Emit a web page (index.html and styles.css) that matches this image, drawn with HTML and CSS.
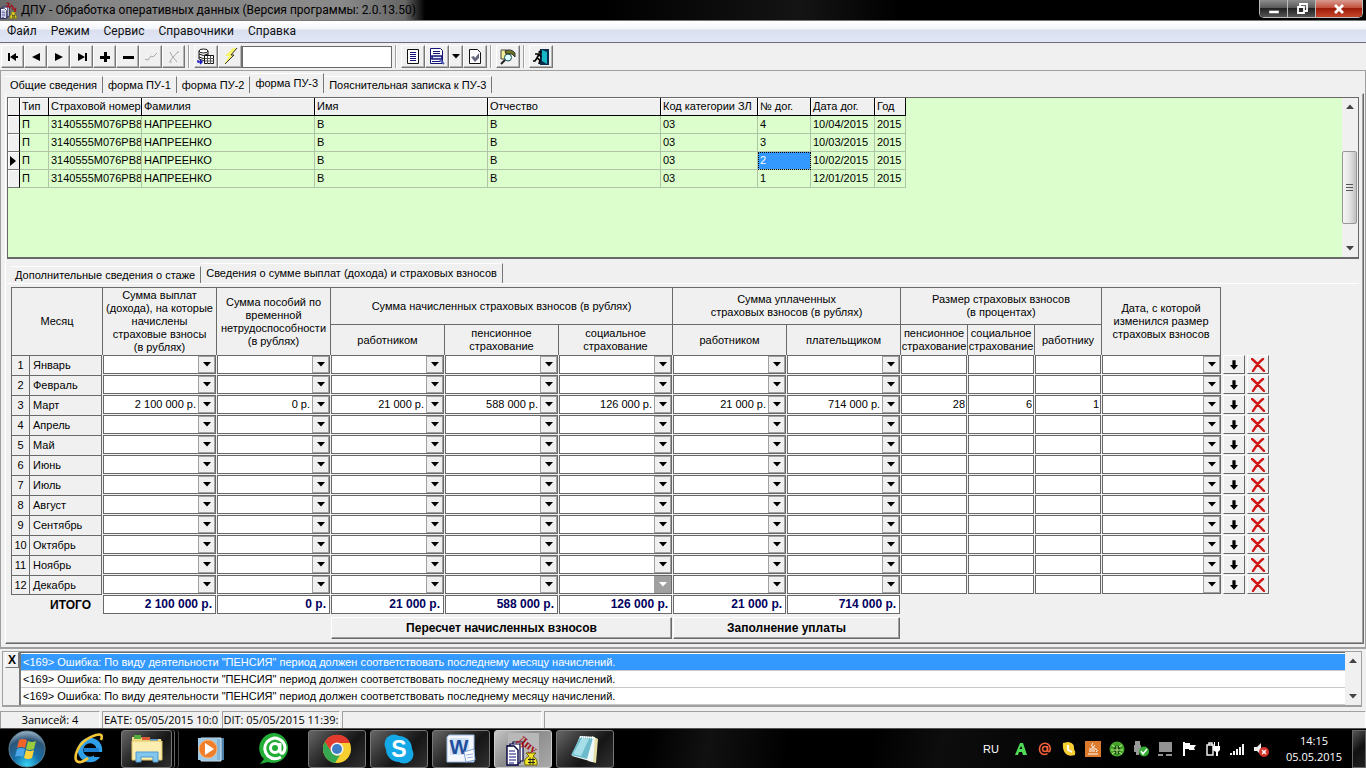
FILE: index.html
```html
<!DOCTYPE html>
<html lang="ru">
<head>
<meta charset="utf-8">
<title>ДПУ - Обработка оперативных данных</title>
<link rel="stylesheet" href="styles.css">
</head>
<body>
<svg class="defs" aria-hidden="true">
  <symbol id="down" viewBox="0 0 8 5"><path d="M0 0h8L4 4.5z" fill="currentColor"/></symbol>
  <symbol id="up" viewBox="0 0 8 5"><path d="M0 5h8L4 .5z" fill="currentColor"/></symbol>
  <symbol id="fill" viewBox="0 0 10 12"><path d="M3 0h4v6h3L5 12 0 6h3z"/></symbol>
  <symbol id="del" viewBox="0 0 14 14"><path d="M1 1c4 3 8 8 12 12M12 1C8 4 5 8 2 13" fill="none" stroke="#d01414" stroke-width="2.4" stroke-linecap="round"/></symbol>
  <symbol id="dpu" viewBox="0 0 32 32">
    <path d="M7 8h10v19H7z" fill="#fff" stroke="#000040" stroke-width="1.2"/>
    <path d="M4 10h10v19H4z" fill="#fff" stroke="#000040" stroke-width="1.2"/>
    <path d="M1 12h7l4 4v15H1z" fill="#fff" stroke="#000040" stroke-width="1.4"/>
    <path d="M3 17h6M3 20h7M3 23h7M3 26h7M3 29h5" stroke="#10107a" stroke-width="1.2"/>
    <path d="M20 19h10l-3 3q5 3 4 9H19q-2-6 4-9z" fill="#f2e52b" stroke="#6f6500"/>
    <path d="M22 25.500h7M22 28.500h7M24 23.500v7M27 23.500v7" stroke="#222"/>
  </symbol>
</svg>

<div class="app">
  <header class="titlebar">
    <svg class="title-icon" viewBox="0 0 32 32"><use href="#dpu"/><path d="M12 2l5 1-2 6M11 8l8 2 3-4 3 4-2 4M25 12l5 5M30 11l-3 8" fill="none" stroke="#a3121a" stroke-width="2.400"/></svg>
    <h1 class="title">ДПУ - Обработка оперативных данных (Версия программы: 2.0.13.50)</h1>
    <div class="winbtns">
      <button class="winbtn" aria-label="Свернуть"><svg width="12" height="12"><path d="M1 7.500h10v3H1z" fill="#fff" stroke="#444" stroke-width=".5"/></svg></button>
      <button class="winbtn" aria-label="Восстановить"><svg width="12" height="12"><path d="M4 3V1h7v7H9M2 4h6v6H2z" fill="none" stroke="#fff" stroke-width="1.800"/></svg></button>
      <button class="winbtn winbtn-close" aria-label="Закрыть"><svg width="12" height="12"><path d="M2 2l8 8M10 2l-8 8" stroke="#fff" stroke-width="2.800"/></svg></button>
    </div>
  </header>

  <nav class="menubar">
    <a href="#">Файл</a><a href="#">Режим</a><a href="#">Сервис</a><a href="#">Справочники</a><a href="#">Справка</a>
  </nav>

  <div class="toolbar">
    <div class="toolgroup">
      <button class="tool" aria-label="Первая"><svg width="12" height="10"><path d="M1 1h2v8H1zM9 1v8L3 5zM9 4h2v2H9z"/></svg></button>
      <button class="tool" aria-label="Предыдущая"><svg width="10" height="10"><path d="M9 1v8L1 5z"/></svg></button>
      <button class="tool" aria-label="Следующая"><svg width="10" height="10"><path d="M1 1v8l8-4z"/></svg></button>
      <button class="tool" aria-label="Последняя"><svg width="12" height="10"><path d="M9 1h2v8H9zM2 1v8l7-4z"/></svg></button>
      <button class="tool" aria-label="Добавить"><svg width="10" height="10"><path d="M4 0h3v4h3v3H7v3H4V7H0V4h4z"/></svg></button>
      <button class="tool" aria-label="Удалить"><svg width="12" height="10"><path d="M1 4h11v3H1z"/></svg></button>
      <button class="tool" aria-label="Сохранить" disabled><svg width="14" height="12"><path d="M1 8l3 1 3-4 2 1 4-4" fill="none" stroke="#a8a8a8"/></svg></button>
      <button class="tool" aria-label="Отменить" disabled><svg width="12" height="12"><path d="M2 1l2 4 5 6M10 1L6 5l-4 5M1 11h3M9 1h2" fill="none" stroke="#a8a8a8"/></svg></button>
    </div>
    <div class="toolgroup">
      <button class="tool" aria-label="База данных"><svg width="18" height="17"><path d="M2 3v8q4 3 9 0V3" fill="#fff" stroke="#111"/><ellipse cx="6.500" cy="3" rx="4.500" ry="2" fill="#fff" stroke="#111"/><path d="M2 6q4 3 9 0M2 9q4 3 9 0" fill="none" stroke="#111"/><path d="M7.500 7.500h9v8h-9z" fill="#fff" stroke="#111"/><path d="M8 10.500h9M8 13h9M10.500 8v8M13.500 8v8" stroke="#555"/><path d="M1 12v2h4M3 12l2 2-2 2" fill="none" stroke="#1717c0" stroke-width="1.400"/></svg></button>
      <button class="tool" aria-label="Обновить"><svg width="16" height="17"><path d="M11 0L3 8h4l-5 8L13 7H9l6-7z" fill="#f7f36a"/><path d="M15 0L9 7h3L3 16" fill="none" stroke="#333"/></svg></button>
      <input class="search" type="text" aria-label="Поиск">
    </div>
    <div class="toolgroup">
      <button class="tool" aria-label="Документ"><svg width="12" height="15"><path d="M.5.500h11v14H.5z" fill="#fff" stroke="#111"/><path d="M3 3.500h6M3 5.500h6M3 7.500h6M3 9.500h6M3 11.500h6" stroke="#141478"/></svg></button>
      <button class="tool" aria-label="Просмотр"><svg width="16" height="17"><path d="M1.500.500h10l2 2v13h-12z" fill="#fff" stroke="#141478"/><path d="M4 3.500h7M4 5.500h7M3 13.500h8" stroke="#141478"/><path d="M3 8h10v3H3z" fill="#dce5ff" stroke="#141478" stroke-width="1.600"/><path d="M11 12l4 4" stroke="#4d5fb5" stroke-width="2"/></svg></button>
      <button class="tool tool-more" aria-label="Ещё"><svg width="8" height="5"><use href="#down"/></svg></button>
      <button class="tool" aria-label="Проверка"><svg width="12" height="15"><path d="M.5.500h8l3 3v11H.5z" fill="#fff" stroke="#111"/><path d="M2 8l3-1 1 2 4-5v5l-4 4z" fill="#66667f"/></svg></button>
    </div>
    <div class="toolgroup">
      <button class="tool" aria-label="Поиск документа"><svg width="16" height="16"><path d="M1 1h6l1 1v8H1z" fill="#f4ef95" stroke="#444"/><path d="M5 2q6-3 10 2v4l-3-3H6z" fill="#6f7324" stroke="#333"/><circle cx="8" cy="8.500" r="3.500" fill="#dff" stroke="#174d4d"/><path d="M5 11l-4 4" stroke="#222" stroke-width="2"/></svg></button>
    </div>
    <div class="toolgroup">
      <button class="tool" aria-label="Выход"><svg width="16" height="16"><path d="M7 0h9v16H7z" fill="#082f50"/><path d="M9 1l5 2v12l-5-3z" fill="#18b7c6"/><circle cx="7" cy="3" r="1.600"/><path d="M2 5l4 0 2 3M6 5L4 9l3 2-1 4M4 9l-2 3H0" fill="none" stroke="#000" stroke-width="1.700"/></svg></button>
    </div>
  </div>

  <main class="workspace">
    <div class="tabs" role="tablist">
      <button class="tab" role="tab">Общие сведения</button>
      <button class="tab" role="tab">форма ПУ-1</button>
      <button class="tab" role="tab">форма ПУ-2</button>
      <button class="tab tab-active" role="tab" aria-selected="true">форма ПУ-3</button>
      <button class="tab" role="tab">Пояснительная записка к ПУ-3</button>
    </div>

    <div class="sheet">
      <section class="grid-box">
        <div class="grid-area">
          <table class="grid">
            <colgroup><col class="g-ind"><col class="g-type"><col class="g-num"><col class="g-name"><col class="g-name"><col class="g-name"><col class="g-code"><col class="g-dog"><col class="g-date"><col class="g-year"></colgroup>
            <thead><tr><th></th><th>Тип</th><th>Страховой номер</th><th>Фамилия</th><th>Имя</th><th>Отчество</th><th>Код категории ЗЛ</th><th>№ дог.</th><th>Дата дог.</th><th>Год</th></tr></thead>
            <tbody>
              <tr><th></th><td>П</td><td>3140555М076РВ8</td><td>НАПРЕЕНКО</td><td>В</td><td>В</td><td>03</td><td>4</td><td>10/04/2015</td><td>2015</td></tr>
              <tr><th></th><td>П</td><td>3140555М076РВ8</td><td>НАПРЕЕНКО</td><td>В</td><td>В</td><td>03</td><td>3</td><td>10/03/2015</td><td>2015</td></tr>
              <tr><th><svg class="pointer" width="6" height="10"><path d="M0 0v10l6-5z"/></svg></th><td>П</td><td>3140555М076РВ8</td><td>НАПРЕЕНКО</td><td>В</td><td>В</td><td>03</td><td class="picked">2</td><td>10/02/2015</td><td>2015</td></tr>
              <tr><th></th><td>П</td><td>3140555М076РВ8</td><td>НАПРЕЕНКО</td><td>В</td><td>В</td><td>03</td><td>1</td><td>12/01/2015</td><td>2015</td></tr>
            </tbody>
          </table>
        </div>
        <div class="scroll">
          <svg width="8" height="5"><use href="#up"/></svg>
          <div class="track"><div class="thumb"><svg width="7" height="8"><path d="M0 .5h7M0 3.500h7M0 6.500h7" stroke="#555"/></svg></div></div>
          <svg width="8" height="5"><use href="#down"/></svg>
        </div>
      </section>

      <div class="tabs subtabs" role="tablist">
        <button class="tab" role="tab">Дополнительные сведения о стаже</button>
        <button class="tab tab-active" role="tab" aria-selected="true">Сведения о сумме выплат (дохода) и страховых взносов</button>
      </div>

      <section class="pay-box">
        <table class="pay">
          <colgroup><col class="p-no"><col class="p-month"><col class="p-sum"><col class="p-sum"><col class="p-sum"><col class="p-sum"><col class="p-sum"><col class="p-sum"><col class="p-sum"><col class="p-pct"><col class="p-pct"><col class="p-pct"><col class="p-date"><col class="p-act"><col class="p-act"></colgroup>
          <thead>
            <tr class="head-top">
              <th colspan="2" rowspan="2">Месяц</th>
              <th rowspan="2">Сумма выплат<br>(дохода), на которые<br>начислены<br>страховые взносы<br>(в рублях)</th>
              <th rowspan="2">Сумма пособий по<br>временной<br>нетрудоспособности<br>(в рублях)</th>
              <th colspan="3">Сумма начисленных страховых взносов (в рублях)</th>
              <th colspan="2">Сумма уплаченных<br>страховых взносов (в рублях)</th>
              <th colspan="3">Размер страховых взносов<br>(в процентах)</th>
              <th rowspan="2" class="last">Дата, с которой<br>изменился размер<br>страховых взносов</th>
            </tr>
            <tr class="head-sub">
              <th>работником</th><th>пенсионное<br>страхование</th><th>социальное<br>страхование</th><th>работником</th><th>плательщиком</th><th>пенсионное<br>страхование</th><th>социальное<br>страхование</th><th>работнику</th>
            </tr>
          </thead>
          <tbody id="months"></tbody>
          <tfoot>
            <tr class="totals">
              <th colspan="2">ИТОГО</th>
              <td><output>2 100 000 р.</output></td><td><output>0 р.</output></td><td><output>21 000 р.</output></td><td><output>588 000 р.</output></td><td><output>126 000 р.</output></td><td><output>21 000 р.</output></td><td><output>714 000 р.</output></td>
            </tr>
            <tr class="actions">
              <td colspan="4"></td>
              <td colspan="3"><button class="wide">Пересчет начисленных взносов</button></td>
              <td colspan="2"><button class="wide">Заполнение уплаты</button></td>
            </tr>
          </tfoot>
        </table>
      </section>
    </div>
  </main>

  <section class="log">
    <button class="log-close" aria-label="Закрыть список">X</button>
    <ul class="log-list">
      <li class="log-picked">&lt;169&gt; Ошибка: По виду деятельности "ПЕНСИЯ" период должен соответствовать последнему месяцу начислений.</li>
      <li>&lt;169&gt; Ошибка: По виду деятельности "ПЕНСИЯ" период должен соответствовать последнему месяцу начислений.</li>
      <li>&lt;169&gt; Ошибка: По виду деятельности "ПЕНСИЯ" период должен соответствовать последнему месяцу начислений.</li>
    </ul>
    <div class="scroll">
      <svg width="8" height="5"><use href="#up"/></svg>
      <svg width="8" height="5"><use href="#down"/></svg>
    </div>
  </section>

  <footer class="status">
    <span class="st st-count">Записей: 4</span>
    <span class="st st-time">EATE: 05/05/2015 10:0</span>
    <span class="st st-time">DIT: 05/05/2015 11:39:</span>
    <span class="st st-wide"></span>
    <span class="st st-rest"></span>
  </footer>
</div>

<div class="taskbar">
  <button class="start" aria-label="Пуск"><svg width="40" height="40" viewBox="0 0 40 40">
    <defs><radialGradient id="orb" cx=".5" cy=".95" r=".95"><stop offset="0" stop-color="#35d5f5"/><stop offset=".4" stop-color="#176fa8"/><stop offset=".75" stop-color="#2d5578"/><stop offset="1" stop-color="#9fb7c9"/></radialGradient></defs>
    <circle cx="20" cy="20" r="18" fill="url(#orb)" stroke="#5f8297"/>
    <path d="M12 11q4-2 8 0l-2 8q-4-2-8 0z" fill="#f0642a"/><path d="M21 12q4 2 8 0l-2 8q-4 2-8 0z" fill="#9acb3c"/><path d="M10 20q4-2 8 0l-2 8q-4-2-8 0z" fill="#4aa6e8"/><path d="M19 21q4 2 8 0l-2 8q-4 2-8 0z" fill="#ffd43a"/>
  </svg></button>
  <button class="task task-flat" aria-label="Internet Explorer"><svg width="34" height="34" viewBox="0 0 34 34">
    <circle cx="18" cy="18" r="9.500" fill="none" stroke="#2f9fe8" stroke-width="5.500"/><path d="M12 18h15" stroke="#1d7fd0" stroke-width="4"/><path d="M22 20h9v5h-9z" fill="#000"/><path d="M29 8q3-7-5-5Q8 8 4 22q-2 9 5 8 4-1 7-4" fill="none" stroke="#f3c63a" stroke-width="2.600"/>
  </svg></button>
  <button class="task task-stack" aria-label="Проводник"><svg width="34" height="32" viewBox="0 0 34 32">
    <path d="M2 4h9l2 2h18v21H2z" fill="#f3dc84"/><path d="M4 2h7v4H4z" fill="#53ad3d"/><path d="M12 4h8v3h-8z" fill="#d85b36"/><path d="M20 6h8v3h-8z" fill="#4a91d0"/><path d="M2 8h30v19H2z" fill="#fbeeb0" stroke="#dfc262"/><path d="M6 29V19h22v10h-5v-5H11v5z" fill="#82c6ee" stroke="#4c9bd2"/>
  </svg></button>
  <button class="task task-flat task-player" aria-label="Проигрыватель"><svg width="30" height="30" viewBox="0 0 30 30">
    <path d="M8 4h20v22H8z" fill="#4c7fa8"/><path d="M5 4h20v23H5z" fill="#83b6d9" stroke="#d4e9f6"/><path d="M2 4h19v22H2z" fill="#9ecbe8"/><circle cx="12" cy="15" r="9" fill="#f07f2c" stroke="#f9b070"/><path d="M9 9v12l9-6z" fill="#fff"/>
  </svg></button>
  <button class="task task-flat" aria-label="Агент"><svg width="36" height="36" viewBox="0 0 36 36">
    <path d="M18 2a15 15 0 1 1-7 29l-8 2 4-5A15 15 0 0 1 18 2z" fill="#22ad36"/><circle cx="18" cy="17" r="4.500" fill="none" stroke="#fff" stroke-width="3"/><path d="M23 12v7q0 4 3 3 4-5 0-11-8-8-16 0-5 7 1 14 6 5 13 1" fill="none" stroke="#fff" stroke-width="3"/>
  </svg></button>
  <div class="taskgroup">
    <button class="task" aria-label="Chrome"><svg width="32" height="32" viewBox="0 0 32 32">
      <circle cx="16" cy="16" r="14" fill="#f8cf30"/><path d="M16 16L4 9A14 14 0 0 1 29 10H16z" fill="#e23b2e"/><path d="M16 16l-4 13A14 14 0 0 1 4 9l7 10z" fill="#36a852"/><path d="M10 18L4 9q4-7 12-7 9 0 13 8H16q-6 0-6 8z" fill="#e23b2e"/><path d="M4 9l6 11q4 4 9 2l-5 8A14 14 0 0 1 4 9z" fill="#36a852"/><circle cx="16" cy="16" r="6.500" fill="#f5f5f5"/><circle cx="16" cy="16" r="5" fill="#3d7ec4"/>
    </svg></button>
    <button class="task" aria-label="Skype"><svg width="32" height="32" viewBox="0 0 32 32">
      <circle cx="11" cy="11" r="9.500" fill="#14a8e6"/><circle cx="21" cy="21" r="9.500" fill="#14a8e6"/><circle cx="16" cy="16" r="13" fill="#14a8e6"/><text x="16" y="24" class="mark mark-s">S</text>
    </svg></button>
    <button class="task" aria-label="Word"><svg width="32" height="32" viewBox="0 0 32 32">
      <path d="M4 2h25v27H2V4z" fill="#f3f7fd" stroke="#9bb9df"/><path d="M5 5h19v17H5z" fill="#d3e1f4"/><text x="14" y="21" class="mark mark-w">W</text><path d="M19 19l10-3 1 11-9 2z" fill="#fff" stroke="#7ea3d6"/><path d="M21 22l7-1M22 25l6-1" stroke="#8fb0de"/>
    </svg></button>
    <button class="task task-current" aria-label="ДПУ"><svg width="34" height="34" viewBox="0 0 34 34"><path d="M2 1h31v32H2z" fill="#b8b8b8"/><use href="#dpu" y="2" width="32" height="32"/><text x="11" y="9" class="dpu-mark" transform="rotate(38 11 9)">Дпу</text></svg></button>
    <button class="task" aria-label="Блокнот"><svg width="34" height="32" viewBox="0 0 34 32">
      <path d="M24 3l6 3-2 24-8-2z" fill="#e6dfa8"/><path d="M12 3l15 1-2 25-21-6z" fill="#eef8fa"/><path d="M12 4l13 1-6 21-16-4z" fill="#6dbccb"/><path d="M14 5l7 1-8 17-8-2z" fill="#a7dfe8"/><path d="M12 4l14 1" stroke="#fff" stroke-width="2" stroke-dasharray="1 1"/>
    </svg></button>
  </div>
  <div class="tray">
    <span class="lang">RU</span>
    <svg width="16" height="16"><path d="M2 14L7 2h3l4 12h-4l-1-3H6l-1 3zM6.500 8h3L8 5z" fill="#4fdd55" fill-rule="evenodd"/></svg>
    <svg width="16" height="16"><circle cx="8" cy="8" r="2.500" fill="none" stroke="#f0603a" stroke-width="1.600"/><path d="M10.500 5v4q0 2 2 1.500 2-4-1-7-5-3-8 1-2.500 5 1 8 3 2 6 0" fill="none" stroke="#f0603a" stroke-width="1.600"/></svg>
    <svg width="16" height="16"><path d="M2 2l5-1q7 1 6 7 2 3 1 6-6 2-9-1-4-4-3-11z" fill="#f8cf33"/><path d="M7 4v5l4 2" stroke="#fff" stroke-width="1.800" fill="none"/></svg>
    <svg width="16" height="16"><path d="M0 0h16v16H0z" fill="#dd7a2c"/><path d="M8 2q-3 2 0 5M10 4q-2 1-1 3M4 8h7q3 1 0 3M4 10h6M3 13h10" stroke="#fff" fill="none"/></svg>
    <svg width="16" height="16"><circle cx="8" cy="8" r="7.500" fill="#45a52b"/><ellipse cx="8" cy="9" rx="3.500" ry="4.500" fill="#154d0c"/><path d="M3 4l3 2M13 4l-3 2M2 9h12M3 13l3-2M13 13l-3-2M8 5v8" stroke="#c3f28a"/></svg>
    <svg width="16" height="16"><path d="M2 0h5v4h1v7H6v3H3v-3H1V4h1z" fill="#999"/><circle cx="11" cy="10.500" r="5" fill="#35ad35"/><path d="M8 10l2 3 4-5" fill="none" stroke="#fff" stroke-width="1.500"/></svg>
    <svg width="16" height="16"><path d="M2 1h13v10H2zM1 13h5v2H1zM9 13h6v2H9z" fill="#929292"/></svg>
    <svg width="16" height="16"><path d="M2 1h2v14H2zM4 2h5v2h6l-2 3 1 2H8V8H4z" fill="#fff"/></svg>
    <svg width="16" height="16"><path d="M2 4h6v10H2zM4 2h3v2H4z" fill="none" stroke="#eee" stroke-width="1.500"/><path d="M8 5h7v4l-2 2v4h-2v-4L8 9zM9 1h1v4H9zM13 1h1v4h-1z" fill="#fff"/></svg>
    <svg width="16" height="16"><path d="M1 12h2v2H1zM4 10h2v4H4zM7 8h2v6H7zM10 6h2v8h-2zM13 3h2v11h-2z" fill="#f2f2f2"/></svg>
    <svg width="16" height="16"><path d="M1 6h3l4-4v12l-4-4H1z" fill="#eee"/><circle cx="11" cy="11" r="5" fill="#d5302a"/><path d="M9 9l4 4M13 9l-4 4" stroke="#fff" stroke-width="1.500"/></svg>
  </div>
  <div class="clock"><time>14:15</time><span>05.05.2015</span></div>
  <button class="peek" aria-label="Рабочий стол"></button>
</div>
<script src="months.js"></script>
</body>
</html>
```
FILE: styles.css
```css
* { box-sizing: border-box; }
body {
  margin: 0;
  min-height: 100vh;
  display: flex;
  flex-direction: column;
  background: #f0f0f0;
  color: #000;
  font: 11px/13px "Liberation Sans", Arial, sans-serif;
}
button, input, output { font: inherit; color: inherit; }
button { padding: 0; border: 0; background: none; }
svg { display: block; flex: none; }
.defs { position: absolute; width: 0; height: 0; }
.dpu-mark { font: bold 12px "Liberation Serif", serif; fill: #a3121a; }
.mark { font: bold 23px "Liberation Sans", sans-serif; text-anchor: middle; }
.mark-s { fill: #fff; }
.mark-w { font-size: 20px; fill: #1d4f9f; }

.app { flex: 1; display: flex; flex-direction: column; }

/* Title bar */
.titlebar {
  height: 21px;
  display: flex;
  align-items: center;
  background: linear-gradient(90deg, #6a6a6a 0, #858585 80px, #8a8a8a 340px, #666 405px, #000 425px, #000 600px, #141414 800px, #000 900px);
  border-bottom: 1px solid #777;
}
.title-icon { width: 17px; height: 17px; }
.title { flex: 1; margin: 0 0 0 4px; font: 12px/18px Roboto, "Open Sans", sans-serif; white-space: nowrap; }
.winbtns { display: flex; align-self: flex-start; margin-right: 3px; border: 1px solid #bbb; border-top: 0; border-radius: 0 0 5px 5px; overflow: hidden; }
.winbtn { width: 28px; height: 17px; display: grid; place-items: center; background: linear-gradient(#8d8d8d, #5a5a5a 45%, #222 50%, #555); border-right: 1px solid #bbb; }
.winbtn-close { width: 46px; border-right: 0; background: linear-gradient(#d79b8f, #c3503c 45%, #9c1c08 50%, #c8452c); }

/* Menu */
.menubar {
  height: 22px;
  display: flex;
  gap: 14px;
  padding: 0 7px;
  background: linear-gradient(#fff 0, #f4f6fb 35%, #dae0f0 45%, #e2e7f6 100%);
  border-bottom: 1px solid #6d6d78;
}
.menubar a { color: #111; text-decoration: none; font: 12px/21px Roboto, "Open Sans", sans-serif; }

/* Toolbar */
.toolbar { height: 28px; display: flex; align-items: center; padding-left: 1px; border-bottom: 1px solid #a0a0a0; background: #f0f0f0; }
.toolgroup { display: flex; gap: 0; align-items: center; }
.toolgroup + .toolgroup { margin-left: 3px; padding-left: 5px; border-left: 1px solid #a0a0a0; box-shadow: inset 1px 0 #fff; }
.tool { width: 23px; height: 23px; display: grid; place-items: center; border: 1px solid; border-color: #fff #777 #777 #fff; box-shadow: inset -1px -1px #b5b5b5; }
.toolgroup + .toolgroup .tool { width: 24px; }
.toolgroup + .toolgroup .tool-more { width: 14px; }
.search { width: 150px; height: 22px; padding: 0 4px; border: 1px solid #696969; background: #fff; }

/* Tabs */
.workspace { flex: 1; display: flex; flex-direction: column; padding: 0 1px 3px 4px; border: 1px solid #a0a0a0; border-width: 0 1px 2px 1px; }
.tabs { display: flex; align-items: flex-end; height: 22px; }
.tab { height: 17px; padding: 0 5px; border-top: 1px solid #fff; border-right: 1px solid #777; white-space: nowrap; }
.tab-active { height: 20px; }

.sheet { flex: 1; display: flex; flex-direction: column; padding: 3px 4px 1px 1px; border: 1px solid; border-color: transparent #696969 #696969 #fff; box-shadow: inset -1px -1px #a0a0a0; }

/* Contracts grid */
.grid-box { flex: 1; min-height: 130px; display: flex; border: 1px solid #696969; border-bottom-width: 2px; background: #dcfdcc; }
.grid-area { flex: 1; min-width: 0; overflow: hidden; }
.grid { table-layout: fixed; width: 898px; border-collapse: separate; border-spacing: 0; }
.g-ind { width: 12px; } .g-type { width: 29px; } .g-num { width: 93px; } .g-name { width: 173px; }
.g-code { width: 97px; } .g-dog { width: 53px; } .g-date { width: 64px; } .g-year { width: 31px; }
.grid th, .grid td { height: 18px; padding: 0 0 0 2px; font-weight: normal; text-align: left; white-space: nowrap; overflow: hidden; }
.grid th { background: #f0f0f0; border-right: 1px solid #000; border-bottom: 1px solid #000; box-shadow: inset 1px 1px #fff; }
.grid tbody th { border-bottom-color: #777; }
.grid td { border-right: 1px solid #b0c4a6; border-bottom: 1px solid #b0c4a6; }
.grid .picked { background: #3399ff; color: #fff; outline: 1px dotted #000; outline-offset: -1px; }

/* Scroll bars */
.scroll { width: 16px; display: flex; flex-direction: column; align-items: center; justify-content: space-between; padding: 6px 0; background: #f0f0f0; color: #444; }
.track { flex: 1; width: 100%; padding: 42px 1px 22px 0; display: flex; }
.thumb { flex: 1; display: grid; place-items: center; border: 1px solid #979797; border-radius: 2px; background: linear-gradient(90deg, #f5f5f5, #e4e4e4 50%, #c0c0c0); }

/* Payments */
.subtabs { padding-left: 3px; margin-top: 2px; }
.pay-box { padding: 3px 0 3px 4px; border-top: 1px solid #fff; }
.pay { table-layout: fixed; width: 1258px; border-collapse: separate; border-spacing: 0; }
.p-no { width: 18px; } .p-month { width: 73px; } .p-sum { width: 114px; } .p-pct { width: 67px; }
.p-date { width: 120px; } .p-act { width: 24px; }
.pay th, .pay td { padding: 0; font-weight: normal; }
.pay thead th { border-top: 1px solid #696969; border-left: 1px solid #696969; white-space: nowrap; }
.pay thead .last { border-right: 1px solid #696969; }
.head-top { height: 37px; }
.head-sub { height: 31px; }
.pay tbody tr { height: 20px; }
.pay tbody th { border-top: 1px solid #696969; border-left: 1px solid #696969; }
.pay tbody tr:last-child th { border-bottom: 1px solid #696969; }
.pay .month { text-align: left; padding-left: 3px; border-right: 1px solid #696969; }
.pay tbody td, .totals td { padding: 0 0 1px 1px; }
.pay tbody .act { padding-left: 2px; }
.field { height: 19px; display: flex; border: 1px solid #696969; background: #fff; }
.field input { flex: 1; min-width: 0; width: 100%; padding: 0 1px 0 0; border: 0; outline: 0; background: none; text-align: right; }
.field-combo input { padding-right: 2px; }
.drop { width: 17px; display: grid; place-items: center; background: #f0f0f0; border: 1px solid #a0a0a0; }
.drop-used { background: #a0a0a0; color: #fff; }
.rowbtn { width: 100%; height: 19px; display: grid; place-items: center; border: 1px solid; border-color: #fff #696969 #696969 #fff; }
.totals { font-size: 12px; }
.totals th { text-align: right; }
.pay .totals th, .wide { font-weight: bold; }
.pay .totals th { padding-right: 11px; }
.totals output { display: block; height: 19px; padding: 0 3px; border: 1px solid #696969; background: #fff; color: #000060; font-weight: bold; line-height: 17px; text-align: right; }
.actions td { padding: 2px 0 0 1px; }
.wide { width: 100%; height: 22px; font-size: 12px; border: 1px solid; border-color: #fff #696969 #696969 #fff; box-shadow: inset -1px -1px #a0a0a0; }

/* Error list */
.log { display: flex; margin: 2px 4px 3px 2px; padding-left: 2px; border: 1px solid #a0a0a0; border-width: 1px 1px 2px 1px; }
.log-close { align-self: flex-start; width: 14px; height: 16px; font-weight: bold; font-size: 12px; border: 1px solid; border-color: #fff #777 #777 #fff; }
.log-list { flex: 1; margin: 0; padding: 1px 0 0 0; list-style: none; background: #fff; border-left: 2px solid #777; border-top: 1px solid #696969; }
.log-list li { height: 17px; padding-left: 2px; line-height: 17px; border-bottom: 1px solid #c8c8c8; white-space: nowrap; }
.log-list .log-picked { background: #3399ff; color: #fff; }

/* Status bar */
.status { display: flex; gap: 2px; height: 18px; padding-top: 1px; font: 11px/15px "Open Sans", sans-serif; }
.st { border-left: 1px solid #a0a0a0; border-top: 1px solid #a0a0a0; border-right: 1px solid #fff; text-align: center; white-space: nowrap; overflow: hidden; }
.st-count { width: 100px; }
.st-time { width: 118px; }
.st-wide { width: 200px; }
.st-rest { flex: 1; }

/* Task bar */
.taskbar {
  height: 40px;
  display: flex;
  align-items: center;
  border-top: 1px solid #555;
  background: linear-gradient(100deg, #000 0, #000 640px, #111 700px, #000 780px, #000 860px, #0d0d0d 930px, #000 1100px);
  color: #fff;
}
.start { width: 40px; margin-left: 7px; }
.task { width: 58px; height: 38px; display: grid; place-items: center; border: 1px solid #777; border-radius: 3px; background: linear-gradient(135deg, #666 0, #333 35%, #161616 60%, #303030 100%); }
.task-flat { border-color: transparent; background: none; }
.start + .task-flat { width: 64px; margin-left: 10px; }
.task-stack { width: 51px; box-shadow: 2px 0 #000, 3px 0 #666, 6px 0 #000, 7px 0 #444; }
.task-player { margin-left: 10px; }
.task-player + .task-flat { width: 64px; margin-left: 3px; margin-right: 1px; }
.taskgroup { display: flex; gap: 4px; }
.task-current { border-color: #ccc; background: linear-gradient(135deg, #c5c5c5, #8a8a8a 45%, #aaa 100%); }
.tray { display: flex; align-items: center; gap: 8px; margin-left: auto; }
.lang { margin-right: 6px; font: 11px/16px "Liberation Sans", sans-serif; }
.clock { width: 72px; margin: 0 2px 0 9px; display: flex; flex-direction: column; align-items: center; font: 11px/16px "Open Sans", sans-serif; }
.peek { width: 14px; height: 38px; border: 1px solid #666; background: linear-gradient(135deg, #555, #111 50%, #222); }
```
FILE: months.js
```js
const names = ["Январь", "Февраль", "Март", "Апрель", "Май", "Июнь", "Июль",
  "Август", "Сентябрь", "Октябрь", "Ноябрь", "Декабрь"];
const values = {
  2: ["2 100 000 р.", "0 р.", "21 000 р.", "588 000 р.", "126 000 р.", "21 000 р.", "714 000 р.", "28", "6", "1", ""]
};
const columns = ["Сумма выплат", "Сумма пособий", "Начислено работником",
  "Начислено пенсионное", "Начислено социальное", "Уплачено работником",
  "Уплачено плательщиком", "Пенсионное, %", "Социальное, %", "Работнику, %", "Дата изменения"];
const isCombo = col => col < 7 || col === 10;

function field(row, col) {
  const value = values[row] ? values[row][col] : "";
  const label = `${names[row]}: ${columns[col]}`;
  const used = row === 11 && col === 4 ? " drop-used" : "";
  const drop = isCombo(col)
    ? `<button class="drop${used}" aria-label="Открыть: ${label}"><svg width="8" height="5"><use href="#down"/></svg></button>`
    : "";
  return `<td><div class="field${drop ? " field-combo" : ""}"><input type="text" aria-label="${label}" value="${value}">${drop}</div></td>`;
}

document.getElementById("months").innerHTML = names.map((name, row) => `
  <tr><th>${row + 1}</th><th class="month">${name}</th>
  ${columns.map((_, col) => field(row, col)).join("")}
  <td class="act"><button class="rowbtn" aria-label="${name}: заполнить ниже"><svg width="8" height="10"><use href="#fill"/></svg></button></td>
  <td class="act"><button class="rowbtn" aria-label="${name}: удалить"><svg width="14" height="14"><use href="#del"/></svg></button></td></tr>`).join("");
```
